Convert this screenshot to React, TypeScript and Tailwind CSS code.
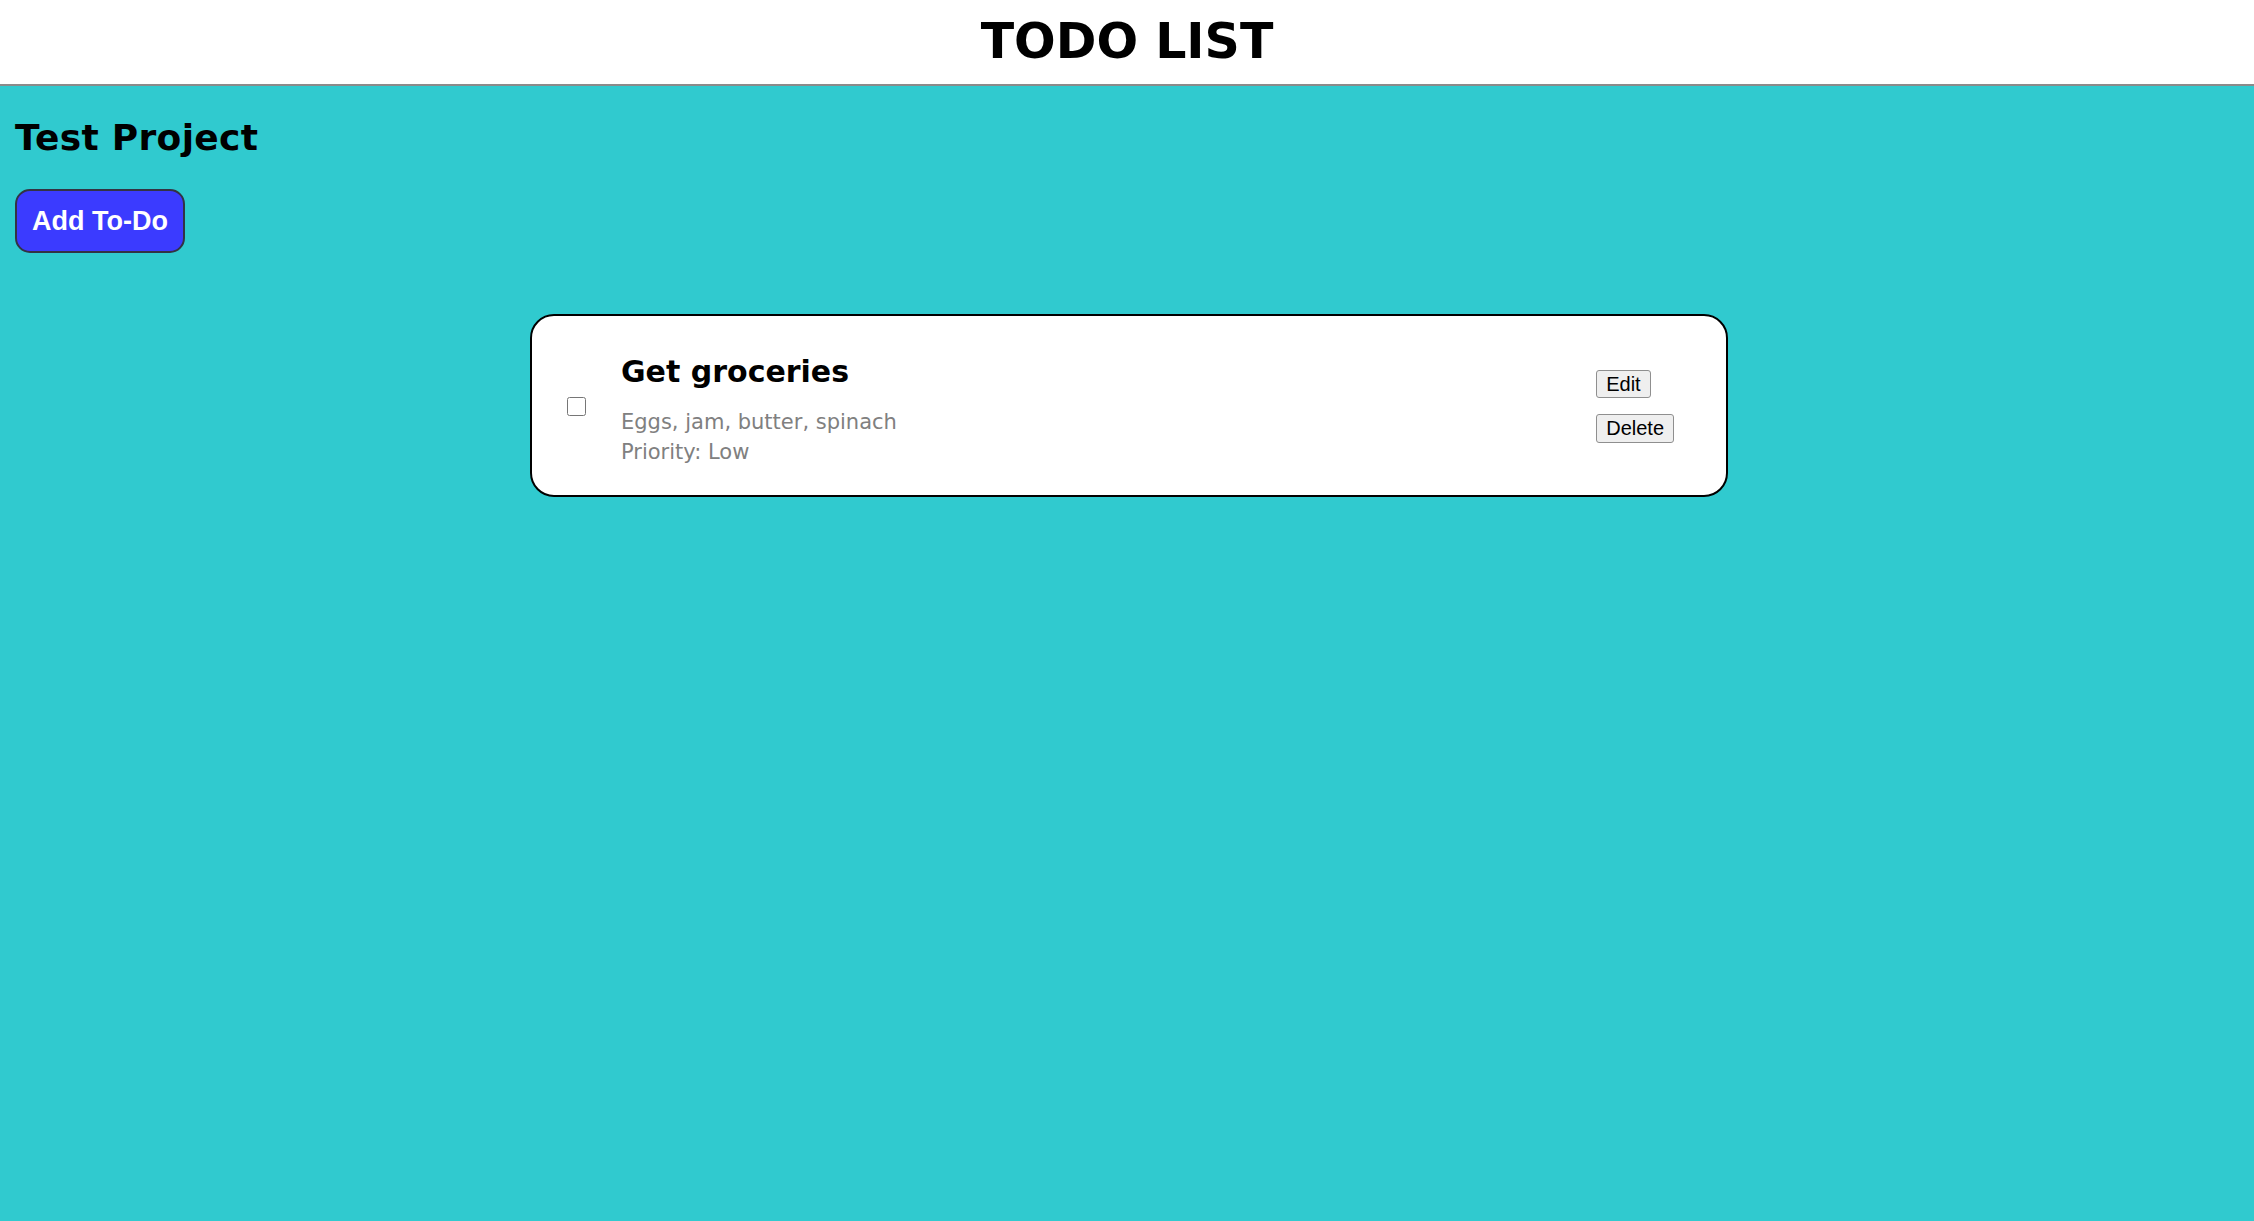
import { useState } from "react"

export default function App() {
  const [done, setDone] = useState(false)

  const todos = [
    {
      id: 1,
      title: "Get groceries",
      description: "Eggs, jam, butter, spinach",
      priority: "Low",
    },
  ]

  return (
    <div className="min-h-screen bg-[#30cacf] font-['DejaVu_Sans',Verdana,sans-serif] text-black">
      {/* Header */}
      <header className="h-[86px] bg-white border-b-2 border-[#8a8a8a] flex items-center justify-center">
        <h1 className="text-[49px] font-bold leading-[56px] mt-[-1px]">TODO LIST</h1>
      </header>

      {/* Project */}
      <main className="px-[15px]">
        <h2 className="text-[36px] font-bold leading-[42px] mt-[31px] mb-[30px] tracking-[0.3px]">Test Project</h2>
        <button className="h-[64px] px-[15px] bg-[#3b3bff] text-white border-2 border-[#333344] rounded-[15px] text-[27px] font-bold font-['Liberation_Sans',Arial,sans-serif]">
          Add To-Do
        </button>

        {/* Todo items */}
        <div className="mt-[61px] flex flex-col gap-4">
          {todos.map((todo) => (
            <div
              key={todo.id}
              className="w-[1198px] h-[183px] ml-[515px] bg-white border-2 border-black rounded-[24px] flex items-center pl-[35px] pr-[52px] pt-[2px]"
            >
              <input
                type="checkbox"
                checked={done}
                onChange={(e) => setDone(e.target.checked)}
                className="w-[19px] h-[19px] m-0 shrink-0"
              />
              <div className="ml-[35px] flex-1 mt-[8px]">
                <h3 className="text-[30px] font-bold leading-[35px]">{todo.title}</h3>
                <p className="mt-[18px] text-[21px] leading-[30px] text-[#808080]">{todo.description}</p>
                <p className="text-[21px] leading-[30px] text-[#808080]">Priority: {todo.priority}</p>
              </div>
              <div className="flex flex-col items-start gap-[16px] font-['Liberation_Sans',Arial,sans-serif]">
                <button className="h-[28px] px-[9px] bg-[#efefef] border border-[#8f8f8f] rounded-[3px] text-[20px] leading-[23px]">
                  Edit
                </button>
                <button className="h-[29px] px-[9px] bg-[#efefef] border border-[#8f8f8f] rounded-[3px] text-[20px] leading-[23px]">
                  Delete
                </button>
              </div>
            </div>
          ))}
        </div>
      </main>
    </div>
  )
}
